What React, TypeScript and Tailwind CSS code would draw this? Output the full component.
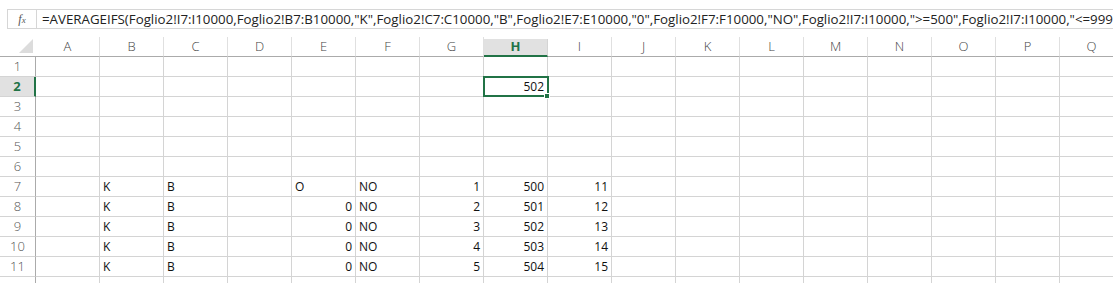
const COLS = ['A', 'B', 'C', 'D', 'E', 'F', 'G', 'H', 'I', 'J', 'K', 'L', 'M', 'N', 'O', 'P', 'Q'];

const FORMULA =
  '=AVERAGEIFS(Foglio2!I7:I10000,Foglio2!B7:B10000,"K",Foglio2!C7:C10000,"B",Foglio2!E7:E10000,"0",Foglio2!F7:F10000,"NO",Foglio2!I7:I10000,">=500",Foglio2!I7:I10000,"<=999';

type Cell = { v: string; right?: boolean };

const data: Record<number, Record<string, Cell>> = {
  2: { H: { v: '502', right: true } },
  7: { B: { v: 'K' }, C: { v: 'B' }, E: { v: 'O' }, F: { v: 'NO' }, G: { v: '1', right: true }, H: { v: '500', right: true }, I: { v: '11', right: true } },
  8: { B: { v: 'K' }, C: { v: 'B' }, E: { v: '0', right: true }, F: { v: 'NO' }, G: { v: '2', right: true }, H: { v: '501', right: true }, I: { v: '12', right: true } },
  9: { B: { v: 'K' }, C: { v: 'B' }, E: { v: '0', right: true }, F: { v: 'NO' }, G: { v: '3', right: true }, H: { v: '502', right: true }, I: { v: '13', right: true } },
  10: { B: { v: 'K' }, C: { v: 'B' }, E: { v: '0', right: true }, F: { v: 'NO' }, G: { v: '4', right: true }, H: { v: '503', right: true }, I: { v: '14', right: true } },
  11: { B: { v: 'K' }, C: { v: 'B' }, E: { v: '0', right: true }, F: { v: 'NO' }, G: { v: '5', right: true }, H: { v: '504', right: true }, I: { v: '15', right: true } },
};

export default function App() {
  const rows = Array.from({ length: 12 }, (_, i) => i + 1);

  return (
    <div className="w-[1113px] h-[283px] overflow-hidden bg-white font-['Open_Sans',sans-serif]">
      {/* formula bar */}
      <div className="h-[37px] flex items-start pt-[9px] pl-[7px]">
        <div className="w-[30px] h-[20px] border border-[#d6d6d6] flex items-center justify-center text-[12px] italic text-[#555] font-['Liberation_Serif',serif]">
          <span>f</span>
          <span className="text-[9px] mt-[3px]">x</span>
        </div>
        <div className="flex-1 h-[20px] border-y border-[#d6d6d6] pl-[5px] text-[13.3px] leading-[18px] text-[#222] whitespace-nowrap overflow-hidden">
          {FORMULA}
        </div>
      </div>

      {/* column headers */}
      <div className="flex h-[20px] text-[13px] font-light text-[#444] whitespace-nowrap">
        <div className="w-[36px] shrink-0 border-b border-[#ababab] relative">
          <div className="absolute right-[3px] bottom-[3px] w-0 h-0 border-l-[14px] border-l-transparent border-b-[14px] border-b-[#dcdcdc]" />
        </div>
        {COLS.map((c) =>
          c === 'H' ? (
            <div
              key={c}
              className="w-[64px] shrink-0 bg-[#e1e1e1] border-b-2 border-[#217346] border-r border-r-[#d4d4d4] flex items-center justify-center font-bold text-[#217346] mt-[2px]"
            >
              {c}
            </div>
          ) : (
            <div
              key={c}
              className="w-[64px] shrink-0 border-b border-[#ababab] border-r border-r-[#e0e0e0] flex items-center justify-center"
            >
              {c}
            </div>
          )
        )}
      </div>

      {/* rows */}
      {rows.map((r) => (
        <div key={r} className="flex h-[20px] whitespace-nowrap">
          {r === 2 ? (
            <div className="w-[36px] shrink-0 bg-[#e1e1e1] border-r-2 border-[#217346] border-b border-b-[#d4d4d4] flex items-center justify-center text-[13px] font-bold text-[#217346]">
              {r}
            </div>
          ) : (
            <div className="w-[36px] shrink-0 border-r border-[#ababab] border-b border-b-[#d4d4d4] flex items-center justify-center text-[13px] font-light text-[#555]">
              {r < 12 ? r : ''}
            </div>
          )}
          {COLS.map((c) => {
            const cell = data[r]?.[c];
            const selected = r === 2 && c === 'H';
            return (
              <div
                key={c}
                className={`w-[64px] shrink-0 border-r border-b border-[#d4d4d4] flex items-center text-[12px] text-[#111] px-[3px] relative ${
                  cell?.right ? 'justify-end' : 'justify-start'
                }`}
              >
                {selected && (
                  <>
                    <div className="absolute -left-px -top-px w-[66px] h-[21px] border-2 border-[#217346]" />
                    <div className="absolute -right-[3px] -bottom-[3px] w-[6px] h-[6px] bg-[#217346] border border-white z-10" />
                  </>
                )}
                {cell?.v}
              </div>
            );
          })}
        </div>
      ))}
    </div>
  );
}
